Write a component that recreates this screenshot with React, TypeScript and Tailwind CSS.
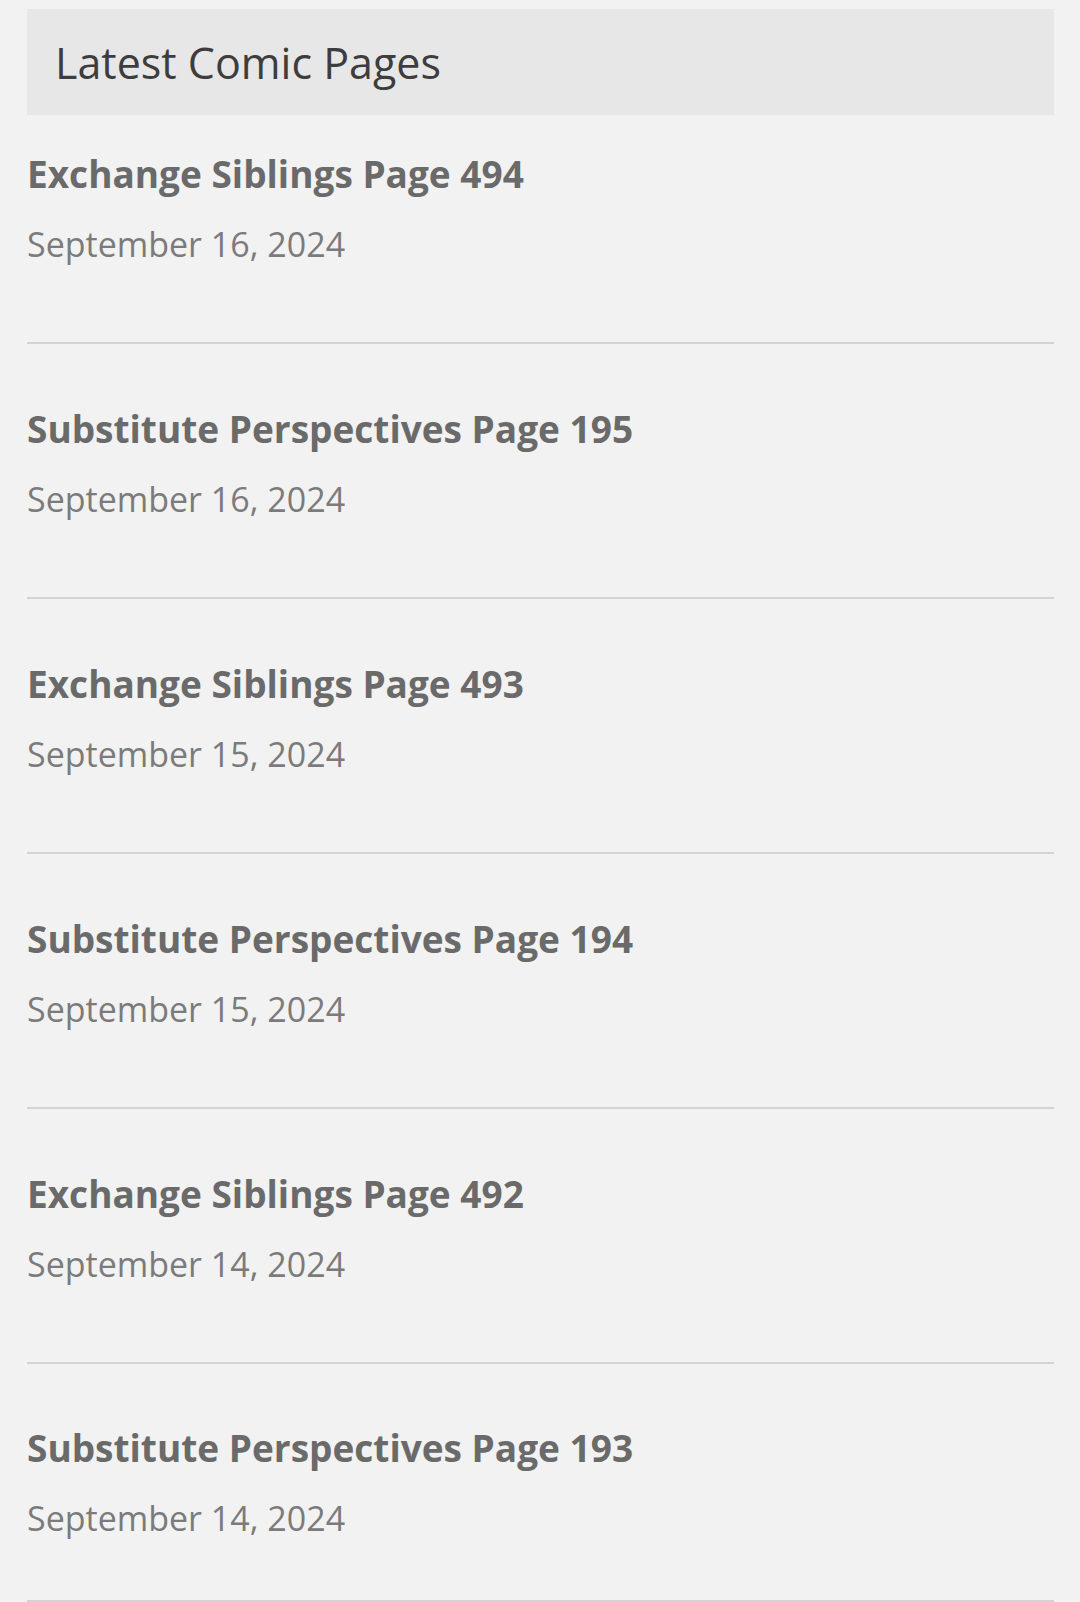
const pages = [
  { title: "Exchange Siblings Page 494", date: "September 16, 2024" },
  { title: "Substitute Perspectives Page 195", date: "September 16, 2024" },
  { title: "Exchange Siblings Page 493", date: "September 15, 2024" },
  { title: "Substitute Perspectives Page 194", date: "September 15, 2024" },
  { title: "Exchange Siblings Page 492", date: "September 14, 2024" },
  { title: "Substitute Perspectives Page 193", date: "September 14, 2024" },
];

export default function App() {
  return (
    <div className="min-h-screen bg-[#f2f2f2] pl-[27px] pr-[26px] pt-[9px] font-['Open_Sans',sans-serif]">
      <div className="flex h-[106px] items-center bg-[#e7e7e7] pl-[28px]">
        <h2 className="text-[43px] font-normal leading-none text-[#3d3d3d]">
          Latest Comic Pages
        </h2>
      </div>

      <ul>
        {pages.map((p, i) => (
          <li
            key={p.title}
            className={
              "border-b-2 border-[#d3d3d3] " +
              (i === 0
                ? "pt-[37px] pb-[78px]"
                : i === pages.length - 1
                  ? "pt-[62px] pb-[62px]"
                  : "pt-[63px] pb-[78px]")
            }
          >
            <a href="#" className="block text-[37px] font-bold leading-[44px] text-[#6a6a6a]">
              {p.title}
            </a>
            <p className="mt-[28px] text-[34px] leading-[40px] text-[#7b7b7b]">
              {p.date}
            </p>
          </li>
        ))}
      </ul>
    </div>
  );
}
